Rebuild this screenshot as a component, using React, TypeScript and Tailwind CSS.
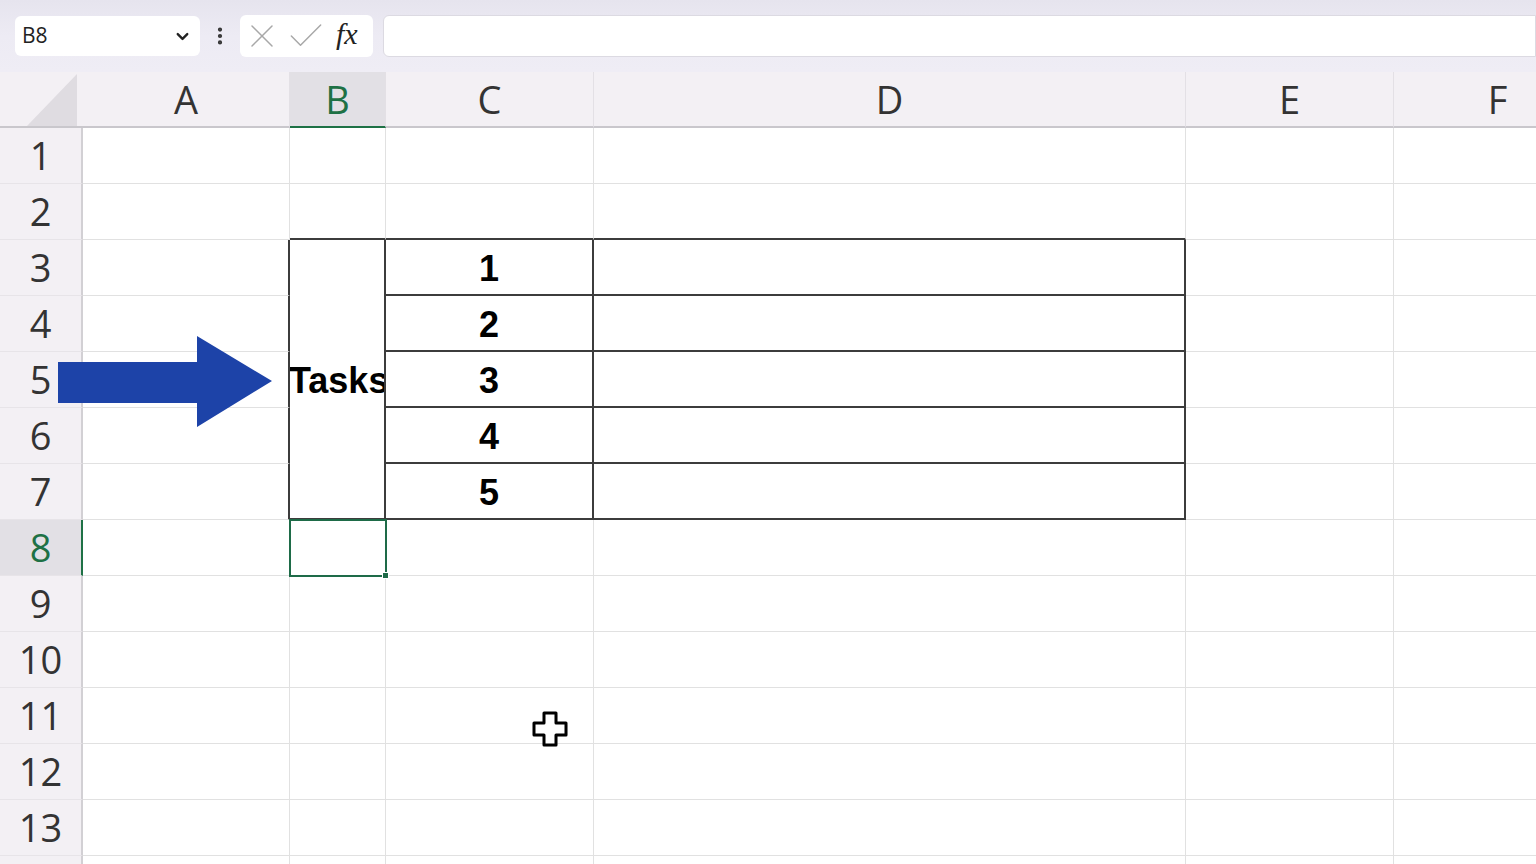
import { ChevronDown, EllipsisVertical, X, Check } from 'lucide-react';

const COLS = ['A', 'B', 'C', 'D', 'E', 'F'];
const ROWS = Array.from({ length: 14 }, (_, i) => i + 1);

const headFont = { fontFamily: '"Open Sans", "Noto Sans", sans-serif' };
const cellFont = { fontFamily: '"Liberation Sans", Arial, sans-serif' };

// which borders are drawn black (the table outline around B3:D7)
function cellClasses(col: string, row: number) {
  const inTable = row >= 3 && row <= 7;
  let right = 'border-r border-r-[#e1e1e1]';
  let bottom = 'border-b border-b-[#e1e1e1]';
  if (col === 'A' && inTable) right = 'border-r-2 border-r-[#3c3c3c]';
  if ((col === 'C' || col === 'D') && inTable) {
    right = 'border-r-2 border-r-[#3c3c3c]';
    bottom = 'border-b-2 border-b-[#3c3c3c]';
  }
  if (col === 'B' && row === 3) {
    right = 'border-r-2 border-r-[#3c3c3c]';
    bottom = 'border-b-2 border-b-[#3c3c3c]';
  }
  if ((col === 'B' || col === 'C' || col === 'D') && row === 2)
    bottom = 'border-b-2 border-b-[#3c3c3c]';
  return `${right} ${bottom}`;
}

function Cursor() {
  return (
    <svg width="40" height="40" viewBox="0 0 40 40" className="absolute left-[530px] top-[709px]">
      <path
        d="M14 4 H26 V14 H36 V26 H26 V36 H14 V26 H4 V14 H14 Z"
        fill="#d8d8d8"
        transform="translate(1.5 1.5)"
        opacity="0.6"
      />
      <path
        d="M14 4 H26 V14 H36 V26 H26 V36 H14 V26 H4 V14 H14 Z"
        fill="#fff"
        stroke="#000"
        strokeWidth="3"
        strokeLinejoin="round"
      />
    </svg>
  );
}

function Arrow() {
  return (
    <svg width="216" height="92" viewBox="0 0 216 92" className="absolute left-[58px] top-[336px]">
      <polygon points="0,26 139,26 139,0 214,45 139,91 139,67 0,67" fill="#1d43a8" />
    </svg>
  );
}

export default function App() {
  return (
    <div className="relative w-[1536px] h-[864px] overflow-hidden bg-white">
      {/* formula bar */}
      <div className="h-[72px] bg-gradient-to-b from-[#e6e4ee] via-[#edebf4] to-[#efedf5] flex items-center pl-[15px]">
        <div className="w-[185px] h-[40px] bg-white rounded-md flex items-center justify-between pl-[7px] pr-[8px]">
          <span className="text-[21px] text-[#222]" style={headFont}>B8</span>
          <ChevronDown size={19} strokeWidth={3} className="text-[#222]" />
        </div>
        <div className="w-[40px] flex justify-center">
          <EllipsisVertical size={22} strokeWidth={2.6} className="text-[#333]" />
        </div>
        <div className="w-[133px] h-[42px] bg-white rounded-md flex items-center pl-[2px]">
          <X size={40} strokeWidth={0.9} className="text-[#a8a8a8]" />
          <Check size={44} strokeWidth={0.8} className="text-[#a8a8a8] ml-[2px]" />
          <span
            className="text-[30px] italic text-[#222] leading-none -mt-[4px] ml-[8px]"
            style={{ fontFamily: '"Liberation Serif", "DejaVu Serif", serif' }}
          >
            fx
          </span>
        </div>
        <div className="ml-[10px] flex-1 h-[42px] bg-white rounded-l-md border border-[#dcdae2]" />
      </div>

      {/* sheet */}
      <div className="grid grid-cols-[83px_207px_96px_208px_592px_208px_208px] auto-rows-[56px]">
        {/* header row */}
        <div className="bg-[#f3f0f4] border-b-2 border-b-[#c9c7cc] flex items-end justify-end">
          <svg width="60" height="54" viewBox="0 0 60 54" className="mr-[3px]">
            <polygon points="57,2 57,54 7,54" fill="#dfdce1" />
          </svg>
        </div>
        {COLS.map((c) => (
          <div
            key={c}
            className={`flex items-center justify-center text-[38px] border-r border-r-[#e3e0e5] ${
              c === 'B'
                ? 'bg-[#e2e0e5] text-[#1e7145] border-b-2 border-b-[#1e7145]'
                : 'bg-[#f3f0f4] text-[#333] border-b-2 border-b-[#c9c7cc]'
            }`}
            style={headFont}
          >
            {c}
          </div>
        ))}

        {ROWS.map((r) => [
          <div
            key={`h${r}`}
            className={`flex items-center justify-center text-[38px] border-b border-b-[#e7e4e8] ${
              r === 8
                ? 'bg-[#e2e0e5] text-[#1e7145] border-r-2 border-r-[#1e7145]'
                : 'bg-[#f3f0f4] text-[#333] border-r-2 border-r-[#d2d0d4]'
            }`}
            style={headFont}
          >
            {r < 14 ? r : ''}
          </div>,
          ...COLS.filter((c) => !(c === 'B' && r >= 4 && r <= 7)).map((c) => {
            const merged = c === 'B' && r === 3;
            const selected = c === 'B' && r === 8;
            const num = c === 'C' && r >= 3 && r <= 7 ? r - 2 : null;
            return (
              <div
                key={`${c}${r}`}
                className={`relative flex items-center ${cellClasses(c, r)} ${
                  merged ? 'row-span-5 overflow-hidden' : ''
                } ${selected ? 'z-10' : ''} ${num ? 'justify-center' : ''}`}
                style={cellFont}
              >
                {merged && (
                  <span className="text-[36px] font-bold text-black whitespace-nowrap -ml-[1px] mt-[4px]">
                    Tasks
                  </span>
                )}
                {num && <span className="text-[36px] font-bold text-black mt-[4px]">{num}</span>}
                {selected && (
                  <div className="absolute -left-[1px] -top-[1px] w-[98px] h-[58px] border-2 border-[#1e6b48]">
                    <div className="absolute -right-[4px] -bottom-[4px] w-[7px] h-[7px] bg-[#1e6b48] border border-white" />
                  </div>
                )}
              </div>
            );
          }),
        ])}
      </div>

      <Arrow />
      <Cursor />
    </div>
  );
}
